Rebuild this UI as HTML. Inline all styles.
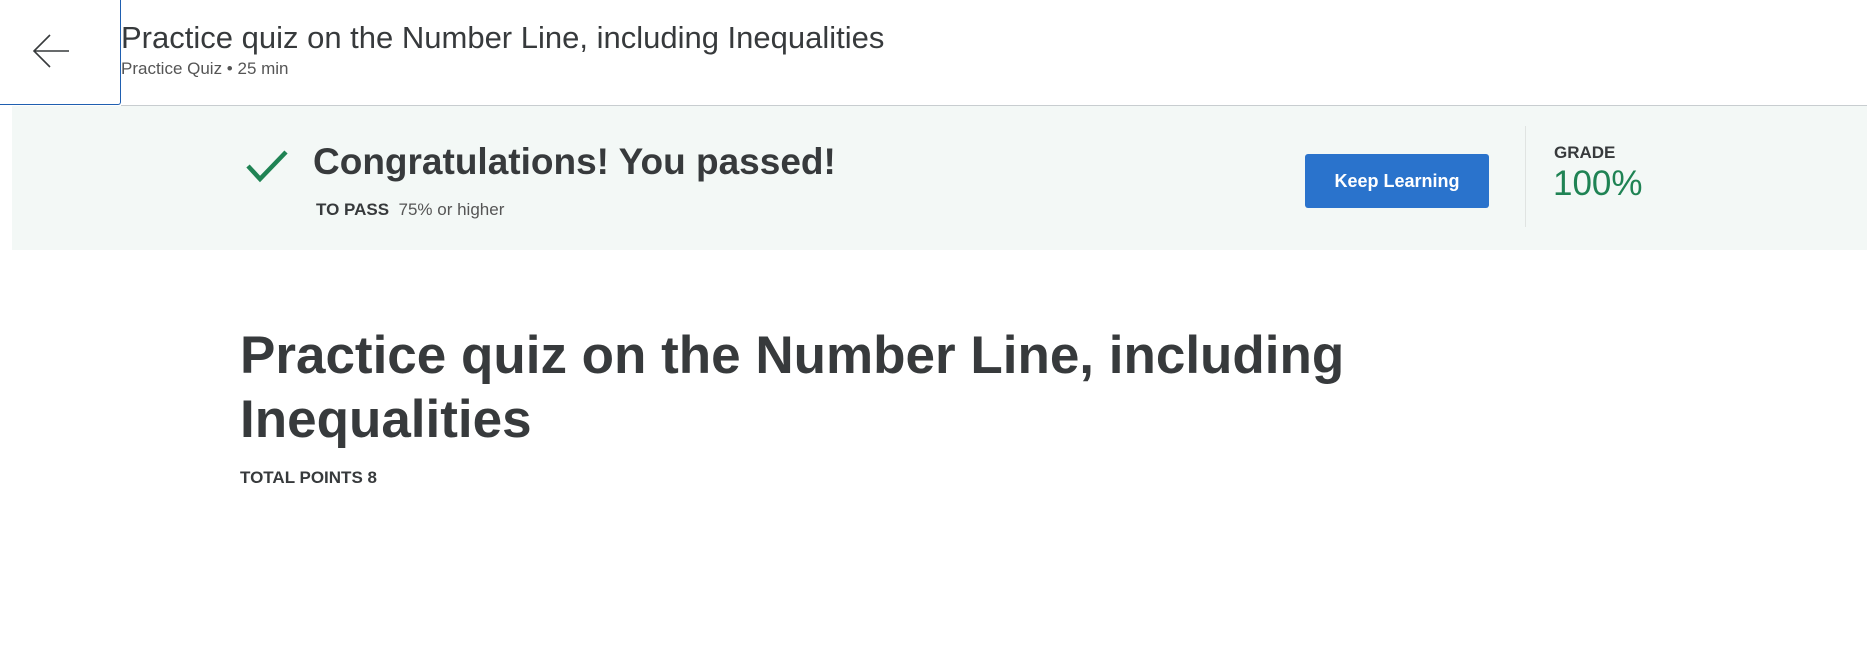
<!DOCTYPE html>
<html><head><meta charset="utf-8"><style>
body{margin:0;width:1867px;height:648px;background:#fff;font-family:"Liberation Sans",sans-serif;color:#373a3c;position:relative;overflow:hidden}
.abs{position:absolute;white-space:nowrap}
</style></head><body>
<div class="abs" style="left:0;top:0;width:120px;height:104px;border-right:1.5px solid #1f5fb0;border-bottom:1.5px solid #1f5fb0;border-radius:0 0 3px 0"></div>
<svg class="abs" style="left:30px;top:30px" width="42" height="42" viewBox="0 0 42 42"><path d="M39 21H4M20 5L4 21L20 37" fill="none" stroke="#373a3c" stroke-width="1.6"/></svg>
<div class="abs" style="left:121px;top:20px;font-size:31px;color:#373a3c">Practice quiz on the Number Line, including Inequalities</div>
<div class="abs" style="left:121px;top:59px;font-size:17px;color:#555">Practice Quiz • 25 min</div>
<div class="abs" style="left:121px;top:105px;width:1746px;height:1px;background:#c8cdd0"></div>
<div class="abs" style="left:12px;top:106px;width:1855px;height:144px;background:#f3f8f6"></div>
<svg class="abs" style="left:245px;top:148px" width="44" height="36" viewBox="0 0 44 36"><path d="M3 18L15 31L41 4" fill="none" stroke="#1f8354" stroke-width="4.5"/></svg>
<div class="abs" style="left:313px;top:141px;font-size:37px;font-weight:bold;color:#373a3c">Congratulations! You passed!</div>
<div class="abs" style="left:316px;top:200px;font-size:17px"><b>TO PASS</b>&nbsp; <span style="color:#555">75% or higher</span></div>
<div class="abs" style="left:1305px;top:154px;width:184px;height:54px;background:#2a73cc;border-radius:3px;color:#fff;font-weight:bold;font-size:18px;text-align:center;line-height:54px">Keep Learning</div>
<div class="abs" style="left:1525px;top:126px;width:1px;height:101px;background:#e0e4e2"></div>
<div class="abs" style="left:1554px;top:143px;font-size:17px;font-weight:bold">GRADE</div>
<div class="abs" style="left:1553px;top:164px;font-size:35px;color:#1f8354">100%</div>
<div class="abs" style="left:240px;top:324px;font-size:53px;font-weight:bold;line-height:64px;color:#373a3c">Practice quiz on the Number Line, including<br>Inequalities</div>
<div class="abs" style="left:240px;top:468px;font-size:17px;font-weight:bold">TOTAL POINTS 8</div>
</body></html>
